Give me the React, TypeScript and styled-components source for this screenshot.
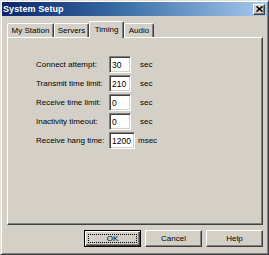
import React from "react";
import styled, { createGlobalStyle } from "styled-components";

const Global = createGlobalStyle`
  html, body { margin: 0; padding: 0; background: #d4d0c8; }
  body { font-family: "Liberation Sans", Arial, sans-serif; }
`;

const Window = styled.div`
  box-sizing: border-box;
  width: 269px;
  height: 255px;
  background: #d4d0c8;
  border: 1px solid;
  border-color: #e4e1dc #404040 #404040 #e4e1dc;
  box-shadow: inset 1px 1px 0 #ffffff, inset -1px -1px 0 #808080;
  padding: 1px;
  display: flex;
  flex-direction: column;
  font-size: 8px;
  color: #000;
`;

const TitleBar = styled.div`
  height: 14px;
  background: linear-gradient(to right, #0a246a 0%, #3a6ea5 45%, #a6caf0 100%);
  display: flex;
  align-items: center;
  justify-content: space-between;
  padding: 0 2px 0 1px;
`;

const Title = styled.span`
  color: #fff;
  font-weight: bold;
  font-size: 9px;
  letter-spacing: 0.1px;
`;

const CloseButton = styled.div`
  box-sizing: border-box;
  width: 12px;
  height: 11px;
  background: #d4d0c8;
  border: 1px solid;
  border-color: #ffffff #404040 #404040 #ffffff;
  box-shadow: inset -1px -1px 0 #808080;
  display: flex;
  align-items: center;
  justify-content: center;
`;

const Content = styled.div`
  flex: 1;
  display: flex;
  flex-direction: column;
  padding: 4px 4px 6px 5px;
`;

const TabRow = styled.div`
  display: flex;
  align-items: flex-end;
  height: 17px;
  position: relative;
  z-index: 1;
`;

const Tab = styled.div<{ $w: number; $active?: boolean }>`
  box-sizing: border-box;
  width: ${(p) => p.$w}px;
  height: ${(p) => (p.$active ? 17 : 14)}px;
  margin-bottom: ${(p) => (p.$active ? -1 : 0)}px;
  background: #d4d0c8;
  border-top: 1px solid #ffffff;
  border-left: 1px solid #ffffff;
  border-right: 1px solid #404040;
  box-shadow: inset -1px 0 0 #808080;
  border-radius: 2px 2px 0 0;
  display: flex;
  align-items: center;
  justify-content: center;
  padding-bottom: ${(p) => (p.$active ? 2 : 0)}px;
`;

const Panel = styled.div`
  box-sizing: border-box;
  height: 188px;
  border: 1px solid;
  border-color: #ffffff #404040 #404040 #ffffff;
  box-shadow: inset -1px -1px 0 #808080;
  padding: 18px 0 0 28px;
`;

const Form = styled.div`
  display: grid;
  grid-template-columns: 73px auto auto;
  row-gap: 2px;
  align-items: center;
  justify-content: start;
`;

const Label = styled.span`
  white-space: nowrap;
`;

const Field = styled.div<{ $w: number }>`
  box-sizing: border-box;
  width: ${(p) => p.$w}px;
  height: 17px;
  background: #fff;
  border: 1px solid;
  border-color: #808080 #ffffff #ffffff #808080;
  box-shadow: inset 1px 1px 0 #404040, inset -1px -1px 0 #d4d0c8;
  padding: 1px 0 0 2px;
  display: flex;
  align-items: center;
  font-size: 8.5px;
`;

const Unit = styled.span<{ $ml: number }>`
  margin-left: ${(p) => p.$ml}px;
`;

const ButtonRow = styled.div`
  display: flex;
  justify-content: flex-end;
  gap: 4px;
  margin-top: 5px;
`;

const Button = styled.div<{ $default?: boolean }>`
  box-sizing: border-box;
  width: 57px;
  height: 17px;
  background: #d4d0c8;
  border: 1px solid;
  border-color: ${(p) => (p.$default ? "#000" : "#ffffff #404040 #404040 #ffffff")};
  box-shadow: ${(p) =>
    p.$default
      ? "inset 1px 1px 0 #ffffff, inset -1px -1px 0 #404040, inset -2px -2px 0 #808080"
      : "inset -1px -1px 0 #808080"};
  display: flex;
  align-items: center;
  justify-content: center;
  position: relative;
`;

const Focus = styled.div`
  position: absolute;
  left: 3px;
  top: 3px;
  right: 3px;
  bottom: 3px;
  border: 1px dotted #000;
`;

const rows = [
  { label: "Connect attempt:", value: "30", unit: "sec", w: 22 },
  { label: "Transmit time limit:", value: "210", unit: "sec", w: 22 },
  { label: "Receive time limit:", value: "0", unit: "sec", w: 22 },
  { label: "Inactivity timeout:", value: "0", unit: "sec", w: 22 },
  { label: "Receive hang time:", value: "1200", unit: "msec", w: 26 },
];

export default function App() {
  return (
    <>
      <Global />
      <Window>
        <TitleBar>
          <Title>System Setup</Title>
          <CloseButton>
            <svg width="7" height="6" viewBox="0 0 7 6">
              <path d="M0.5 0.5 L6.5 5.5 M6.5 0.5 L0.5 5.5" stroke="#000" strokeWidth="1.6" />
            </svg>
          </CloseButton>
        </TitleBar>
        <Content>
          <TabRow>
            <Tab $w={47}>My Station</Tab>
            <Tab $w={35}>Servers</Tab>
            <Tab $w={35} $active>Timing</Tab>
            <Tab $w={30}>Audio</Tab>
          </TabRow>
          <Panel>
            <Form>
              {rows.map((r) => (
                <React.Fragment key={r.label}>
                  <Label>{r.label}</Label>
                  <Field $w={r.w}>{r.value}</Field>
                  <Unit $ml={r.unit === "msec" ? 3 : 5}>{r.unit}</Unit>
                </React.Fragment>
              ))}
            </Form>
          </Panel>
          <ButtonRow>
            <Button $default>
              <Focus />
              OK
            </Button>
            <Button>Cancel</Button>
            <Button>Help</Button>
          </ButtonRow>
        </Content>
      </Window>
    </>
  );
}
